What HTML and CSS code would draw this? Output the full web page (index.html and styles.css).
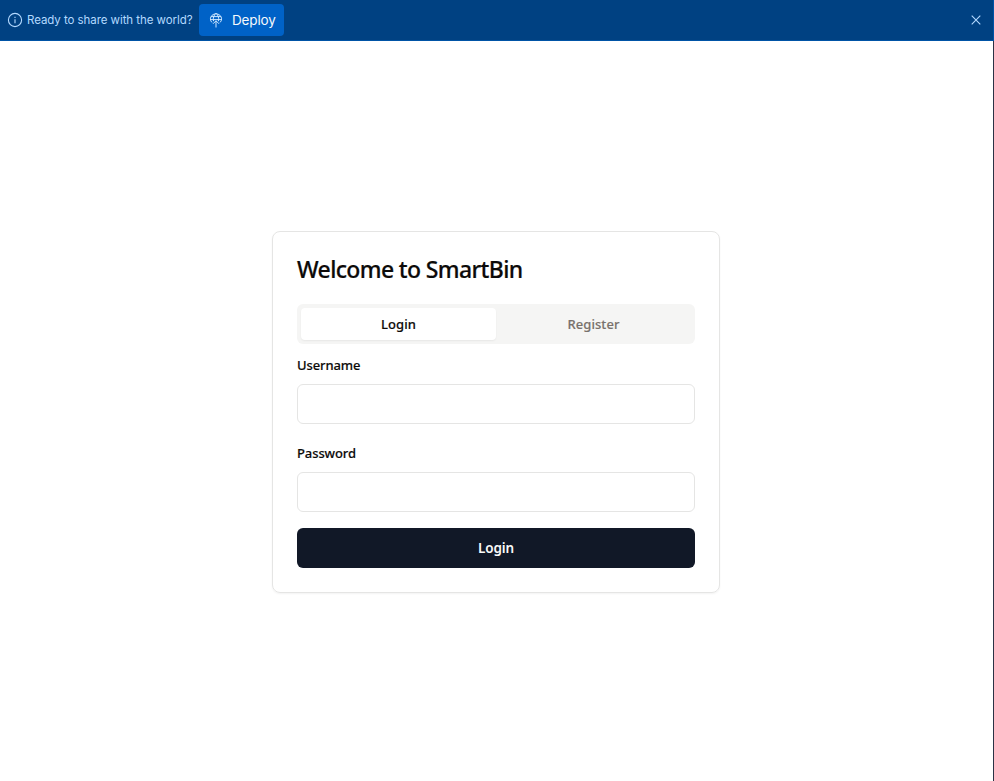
FILE: index.html
```html
<!DOCTYPE html>
<html lang="en">
<head>
<meta charset="utf-8">
<title>SmartBin</title>
<link rel="stylesheet" href="styles.css">
</head>
<body>
<div class="frame">
  <header class="banner">
    <svg class="info" width="16" height="16" viewBox="0 0 16 16" fill="none" stroke="currentColor" stroke-width="1.1"><circle cx="8" cy="8" r="6.6"/><path d="M8 7.3v3.9M8 4.8v1.2"/></svg>
    <span class="banner-text">Ready to share with the world?</span>
    <button class="deploy">
      <svg width="16" height="16" viewBox="0 0 16 16" fill="none" stroke="currentColor"><path d="M3.9 10.4A5.6 5.1 0 1 1 12.1 10.4M3 4.6h10M2.3 7.6h11.4M5.6 9.2C4.7 5.8 6 2.8 8 1.2C10 2.8 11.3 5.8 10.4 9.2M8 15.5V8.8M5 11.8 8 8.8l3 3"/></svg>
      <span class="deploy-text">Deploy</span>
    </button>
    <button class="close" aria-label="Close"><svg width="10" height="10" viewBox="0 0 10 10" fill="none" stroke="currentColor" stroke-width="1.1"><path d="M.7.7l8.6 8.6M9.3.7.7 9.3"/></svg></button>
  </header>
  <main>
    <section class="card">
      <h1>Welcome to SmartBin</h1>
      <div class="tabs">
        <button class="tab active">Login</button>
        <button class="tab">Register</button>
      </div>
      <form>
        <div class="field"><label for="user">Username</label><input id="user"></div>
        <div class="field"><label for="pass">Password</label><input id="pass" type="password"></div>
        <button class="submit" type="button">Login</button>
      </form>
    </section>
  </main>
</div>
</body>
</html>
```

FILE: styles.css
```css
* { box-sizing: border-box; }
body { margin: 0; background: #fff; color: #0c0a09; font-family: "Noto Sans", "Open Sans", sans-serif; }
button, input { font: inherit; margin: 0; border: 0; padding: 0; }
svg { display: block; flex: none; }
.frame { height: 781px; display: flex; flex-direction: column; border-right: 1px solid #2b3245; }
.banner { height: 41px; flex: none; display: flex; align-items: center; margin-right: -1px; padding-left: 7px; padding-right: 12px; background: #004182; color: #b3d9ff; border-bottom: 1px solid #0053a6; border-right: 1px solid #0053a6; font-family: Inter, sans-serif; }
.banner-text { width: 166px; margin-left: 4px; font-size: 11.5px; letter-spacing: -0.06px; white-space: nowrap; }
.deploy { width: 85px; height: 32px; margin-left: 6px; padding-left: 9px; display: flex; align-items: center; gap: 8px; border-radius: 4px; background: #0062c7; color: #cce6ff; }
.deploy-text { font-size: 13.5px; letter-spacing: -0.15px; color: #f5f9fc; }
.close { margin-left: auto; background: none; color: #b3d9ff; }
main { flex: 1; display: flex; align-items: center; justify-content: center; padding-top: 2px; }
.card { width: 448px; height: 362px; margin-right: 1px; padding: 24px; border: 1px solid #e5e5e4; border-radius: 8px; box-shadow: 0 1px 2px rgba(0, 0, 0, .05); }
h1 { margin: 0; height: 48px; font-size: 23px; font-weight: 500; line-height: 26px; letter-spacing: -0.63px; white-space: nowrap; -webkit-text-stroke: 0.2px currentColor; }
.tabs { display: flex; height: 40px; padding: 4px; border-radius: 6px; background: #f5f5f4; }
.tab { flex: 1; border-radius: 4px; background: none; color: #78716c; font-size: 13px; font-weight: 500; letter-spacing: 0.05px; -webkit-text-stroke: 0.15px currentColor; }
.tab.active { background: #fff; color: #0c0a09; box-shadow: 0 1px 2px rgba(0, 0, 0, .06); }
form { display: flex; flex-direction: column; gap: 16px; margin-top: 8px; }
.field { display: flex; flex-direction: column; height: 72px; }
label { height: 32px; line-height: 27px; font-size: 13px; font-weight: 500; letter-spacing: -0.1px; -webkit-text-stroke: 0.15px currentColor; }
input { width: 100%; height: 40px; border: 1px solid #e5e5e4; border-radius: 6px; background: #fff; padding: 0 12px; }
.submit { height: 40px; border-radius: 6px; background: #111827; color: #fafaf9; font-size: 13.5px; font-weight: 600; letter-spacing: -0.15px; }
```
